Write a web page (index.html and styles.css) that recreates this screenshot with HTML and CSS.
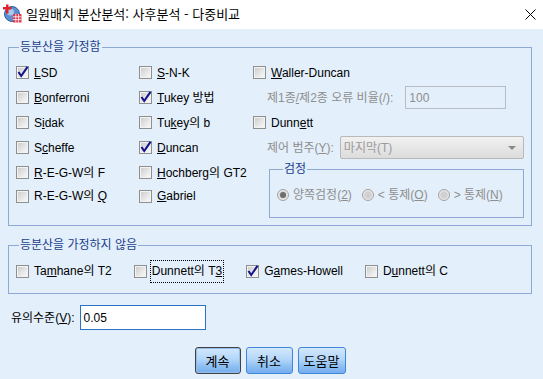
FILE: index.html
```html
<!DOCTYPE html>
<html lang="ko">
<head>
  <meta charset="UTF-8" />
  <title>일원배치 분산분석: 사후분석 - 다중비교</title>
  <link rel="stylesheet" href="styles.css">
</head>
<body>

<div class="titlebar">
  <svg class="app-icon" viewBox="0 0 19 19" xmlns="http://www.w3.org/2000/svg">
    <circle cx="9" cy="10" r="7.5" fill="#5b8fd0" stroke="#2f5f9f" stroke-width="1"/>
    <circle cx="7.5" cy="8" r="3.5" fill="#a9c8ee"/>
    <rect x="3" y="0.5" width="2.5" height="9" fill="#e0202a"/>
    <rect x="0" y="3" width="8.5" height="2.5" fill="#e0202a"/>
    <rect x="10" y="10" width="8.5" height="8.5" fill="#e23a4a"/>
    <path d="M10 12.8h8.5M10 15.6h8.5M12.8 10v8.5M15.6 10v8.5" stroke="#fff" stroke-width="0.8"/>
  </svg>
  <span class="title">일원배치 분산분석: 사후분석 - 다중비교</span>
  <span class="close">
    <svg viewBox="0 0 11 11" width="11" height="11" xmlns="http://www.w3.org/2000/svg">
      <path d="M0.5 0.5L10.5 10.5M10.5 0.5L0.5 10.5" stroke="#000" stroke-width="1"/>
    </svg>
  </span>
</div>

<div class="dialog">

  <fieldset class="group group-equal">
    <legend>등분산을 가정함</legend>
    <div class="cols">
      <div class="col col-a">
        <label class="opt"><span class="cb on"><svg viewBox="0 0 13 13"><path d="M2.5 6 L5.2 10 L11.5 0.8"/></svg></span><span><u>L</u>SD</span></label>
        <label class="opt"><span class="cb"></span><span><u>B</u>onferroni</span></label>
        <label class="opt"><span class="cb"></span><span>S<u>i</u>dak</span></label>
        <label class="opt"><span class="cb"></span><span>S<u>c</u>heffe</span></label>
        <label class="opt"><span class="cb"></span><span><u>R</u>-E-G-W의 F</span></label>
        <label class="opt"><span class="cb"></span><span>R-E-G-W의 <u>Q</u></span></label>
      </div>
      <div class="col col-b">
        <label class="opt"><span class="cb"></span><span><u>S</u>-N-K</span></label>
        <label class="opt"><span class="cb on"><svg viewBox="0 0 13 13"><path d="M2.5 6 L5.2 10 L11.5 0.8"/></svg></span><span><u>T</u>ukey 방법</span></label>
        <label class="opt"><span class="cb"></span><span>Tu<u>k</u>ey의 b</span></label>
        <label class="opt"><span class="cb on"><svg viewBox="0 0 13 13"><path d="M2.5 6 L5.2 10 L11.5 0.8"/></svg></span><span><u>D</u>uncan</span></label>
        <label class="opt"><span class="cb"></span><span><u>H</u>ochberg의 GT2</span></label>
        <label class="opt"><span class="cb"></span><span><u>G</u>abriel</span></label>
      </div>
      <div class="col col-c">
        <label class="opt"><span class="cb"></span><span><u>W</u>aller-Duncan</span></label>
        <div class="field-row ratio-row">
          <span class="dim">제1종<u>/</u>제2종 오류 비율(/):</span>
          <span class="box">100</span>
        </div>
        <label class="opt"><span class="cb"></span><span>Dunn<u>e</u>tt</span></label>
        <div class="field-row combo-row">
          <span class="dim">제어 범주(<u>Y</u>):</span>
          <span class="combo">마지막(T)<span class="arrow"></span></span>
        </div>
        <fieldset class="group test">
          <legend>검정</legend>
          <div class="radios">
            <span class="radio on"></span><span class="dim">양쪽검정(<u>2</u>)</span>
            <span class="radio"></span><span class="dim">&lt; 통제(<u>O</u>)</span>
            <span class="radio"></span><span class="dim">&gt; 통제(<u>N</u>)</span>
          </div>
        </fieldset>
      </div>
    </div>
  </fieldset>

  <fieldset class="group group-unequal">
    <legend>등분산을 가정하지 않음</legend>
    <div class="row-opts">
      <label class="opt"><span class="cb"></span><span>Ta<u>m</u>hane의 T2</span></label>
      <label class="opt focused"><span class="cb"></span><span class="focus">Dunnett의 T<u>3</u></span></label>
      <label class="opt"><span class="cb on"><svg viewBox="0 0 13 13"><path d="M2.5 6 L5.2 10 L11.5 0.8"/></svg></span><span>G<u>a</u>mes-Howell</span></label>
      <label class="opt"><span class="cb"></span><span>D<u>u</u>nnett의 C</span></label>
    </div>
  </fieldset>

  <div class="sig">
    <span>유의수준(<u>V</u>):</span>
    <span class="sig-box">0.05</span>
  </div>

  <div class="buttons">
    <button class="btn default">계속</button>
    <button class="btn w47">취소</button>
    <button class="btn w48">도움말</button>
  </div>

</div>

</body>
</html>
```

FILE: styles.css
```css
* {
  box-sizing: border-box;
}

body {
  margin: 0;
  width: 543px;
  height: 379px;
  overflow: hidden;
  background-color: #e3effb;
  font-family: "Liberation Sans", "Noto Sans CJK KR", sans-serif;
  font-size: 12px;
  line-height: 14px;
  color: #000;
}

u {
  text-underline-offset: 1px;
}

/* title bar */

.titlebar {
  height: 29px;
  background-color: #fff;
  display: flex;
  align-items: center;
  padding: 0 0 2px 3px;
}

.app-icon {
  width: 19px;
  height: 19px;
}

.title {
  margin-left: 4px;
  font-family: "Noto Sans CJK KR", sans-serif;
  font-size: 13px;
  line-height: 16px;
}

.close {
  margin-left: auto;
  width: 26px;
  display: flex;
  justify-content: center;
  padding-top: 1px;
}

/* dialog body */

.dialog {
  padding: 0 11px 0 8px;
}

.group {
  margin: 11px 0 0;
  padding: 0 7px 7px 7px;
  border: 1px solid #8eaad2;
  min-width: 0;
}

.group legend {
  margin-left: 3px;
  padding: 0 1px;
  color: #22408a;
  line-height: 14px;
}

.cols {
  display: flex;
  padding-top: 6px;
}

.col-a {
  width: 123px;
}

.col-b {
  width: 114px;
}

.col-c {
  flex: 1;
}

.opt {
  display: flex;
  align-items: center;
  gap: 5px;
  height: 25px;
  white-space: nowrap;
}

.col-a .opt:last-child,
.col-b .opt:last-child {
  height: 22px;
}

.cb {
  width: 13px;
  height: 13px;
  flex: none;
  border: 1px solid #8e8f8f;
  background: linear-gradient(135deg, #c9c9c9, #eeeeee 70%, #f8f8f8);
  box-shadow: inset 0 0 0 1px #f3f3f3;
  position: relative;
}

.cb svg {
  position: absolute;
  left: -1px;
  top: -1px;
  width: 13px;
  height: 13px;
  overflow: visible;
}

.cb svg path {
  fill: none;
  stroke: #14148a;
  stroke-width: 2.1;
}

.dim {
  color: #8e8e8e;
  white-space: nowrap;
}

.field-row {
  display: flex;
  align-items: center;
  gap: 4px;
  height: 25px;
  padding-left: 14px;
}

.ratio-row {
  gap: 12px;
}

.box {
  width: 101px;
  height: 23px;
  border: 1px solid #b8bdc4;
  padding-left: 3px;
  display: flex;
  align-items: center;
  color: #8e8e8e;
}

.combo-row {
  gap: 6px;
}

.combo {
  flex: 1;
  height: 23px;
  border: 1px solid #b9b9b9;
  border-radius: 2px;
  background: linear-gradient(#f1f1f1, #dcdcdc);
  display: flex;
  align-items: center;
  padding: 0 7px 0 3px;
  color: #9b9b9b;
}

.arrow {
  margin-left: auto;
  width: 0;
  height: 0;
  border-left: 4px solid transparent;
  border-right: 4px solid transparent;
  border-top: 4px solid #8a8a8a;
}

.test {
  margin: 2px 0 0 16px;
  padding: 12px 7px 15px;
}

.test legend {
  margin-left: 6px;
}

.radios {
  display: flex;
  align-items: center;
  height: 14px;
}

.radio {
  width: 12px;
  height: 12px;
  flex: none;
  border-radius: 50%;
  border: 1px solid #a2a2a2;
  background: radial-gradient(circle, #d0d0d0 40%, #ececec 70%);
  margin: 0 4px 0 10px;
  position: relative;
}

.radio:first-child {
  margin-left: 0;
}

.radio.on::after {
  content: "";
  position: absolute;
  left: 2px;
  top: 2px;
  width: 6px;
  height: 6px;
  border-radius: 50%;
  background: #6e6e6e;
}

.group-unequal {
  margin-top: 12px;
  padding-bottom: 13px;
}

.row-opts {
  display: flex;
  align-items: center;
  gap: 22px;
  height: 18px;
  margin-top: 10px;
}

.row-opts .opt {
  height: 18px;
}

.opt.focused {
  gap: 3px;
}

.focus {
  border: 1px dotted #000;
  padding: 0 1px;
  line-height: 21px;
}

/* significance level */

.sig {
  display: flex;
  align-items: center;
  gap: 5px;
  margin-top: 11px;
  padding-left: 3px;
}

.sig-box {
  width: 126px;
  height: 25px;
  border: 1px solid #2a72c6;
  background-color: #fff;
  padding-left: 3px;
  display: flex;
  align-items: center;
}

/* buttons */

.buttons {
  display: flex;
  justify-content: center;
  gap: 5px;
  margin-top: 17px;
}

.btn {
  width: 46px;
  height: 27px;
  padding: 0;
  border: 1px solid #3d86da;
  border-radius: 3px;
  background: linear-gradient(#d3e8fc, #b3d6f8 45%, #8cbef2 75%, #74aeee);
  font-family: "Noto Sans CJK KR", sans-serif;
  font-size: 13px;
  color: #000;
}

.btn.default {
  border-color: #3f4347;
  box-shadow: inset 0 0 0 1px #94bdea;
}

.btn.w47 {
  width: 47px;
}

.btn.w48 {
  width: 48px;
}
```
